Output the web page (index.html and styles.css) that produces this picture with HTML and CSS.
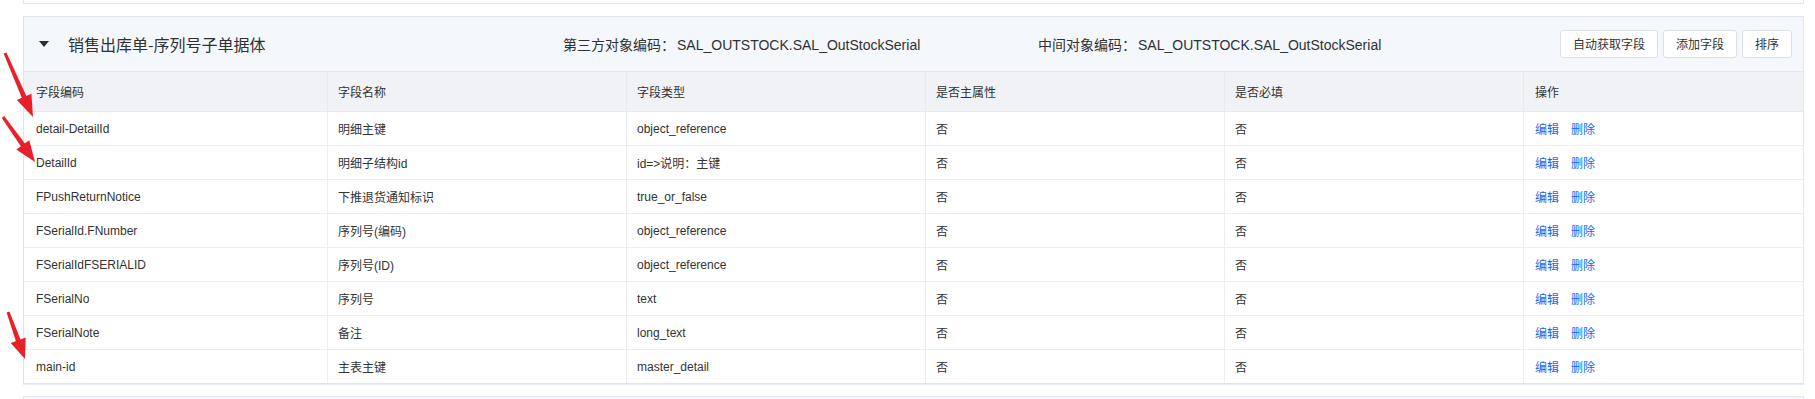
FILE: index.html
```html
<!DOCTYPE html>
<html lang="zh-CN">
<head>
<meta charset="utf-8">
<title>字段列表</title>
<link rel="stylesheet" href="styles.css">
</head>
<body>
<div class="page">
  <div class="card card-prev"></div>

  <div class="card card-main">
    <div class="card-head">
      <div class="title-wrap">
        <span class="caret"></span>
        <span class="title">销售出库单-序列号子单据体</span>
      </div>
      <div class="meta meta-first">第三方对象编码：<span class="meta-val">SAL_OUTSTOCK.SAL_OutStockSerial</span></div>
      <div class="meta">中间对象编码：<span class="meta-val">SAL_OUTSTOCK.SAL_OutStockSerial</span></div>
      <div class="actions">
        <button class="btn">自动获取字段</button>
        <button class="btn">添加字段</button>
        <button class="btn">排序</button>
      </div>
    </div>

    <div class="grid">
      <div class="row row-head">
        <div class="cell">字段编码</div>
        <div class="cell">字段名称</div>
        <div class="cell">字段类型</div>
        <div class="cell">是否主属性</div>
        <div class="cell">是否必填</div>
        <div class="cell">操作</div>
      </div>
      <div class="row">
        <div class="cell">detail-DetailId</div>
        <div class="cell">明细主键</div>
        <div class="cell">object_reference</div>
        <div class="cell">否</div>
        <div class="cell">否</div>
        <div class="cell"><a class="link">编辑</a><a class="link">删除</a></div>
      </div>
      <div class="row">
        <div class="cell">DetailId</div>
        <div class="cell">明细子结构id</div>
        <div class="cell">id=&gt;说明：主键</div>
        <div class="cell">否</div>
        <div class="cell">否</div>
        <div class="cell"><a class="link">编辑</a><a class="link">删除</a></div>
      </div>
      <div class="row">
        <div class="cell">FPushReturnNotice</div>
        <div class="cell">下推退货通知标识</div>
        <div class="cell">true_or_false</div>
        <div class="cell">否</div>
        <div class="cell">否</div>
        <div class="cell"><a class="link">编辑</a><a class="link">删除</a></div>
      </div>
      <div class="row">
        <div class="cell">FSerialId.FNumber</div>
        <div class="cell">序列号(编码)</div>
        <div class="cell">object_reference</div>
        <div class="cell">否</div>
        <div class="cell">否</div>
        <div class="cell"><a class="link">编辑</a><a class="link">删除</a></div>
      </div>
      <div class="row">
        <div class="cell">FSerialIdFSERIALID</div>
        <div class="cell">序列号(ID)</div>
        <div class="cell">object_reference</div>
        <div class="cell">否</div>
        <div class="cell">否</div>
        <div class="cell"><a class="link">编辑</a><a class="link">删除</a></div>
      </div>
      <div class="row">
        <div class="cell">FSerialNo</div>
        <div class="cell">序列号</div>
        <div class="cell">text</div>
        <div class="cell">否</div>
        <div class="cell">否</div>
        <div class="cell"><a class="link">编辑</a><a class="link">删除</a></div>
      </div>
      <div class="row">
        <div class="cell">FSerialNote</div>
        <div class="cell">备注</div>
        <div class="cell">long_text</div>
        <div class="cell">否</div>
        <div class="cell">否</div>
        <div class="cell"><a class="link">编辑</a><a class="link">删除</a></div>
      </div>
      <div class="row row-last">
        <div class="cell">main-id</div>
        <div class="cell">主表主键</div>
        <div class="cell">master_detail</div>
        <div class="cell">否</div>
        <div class="cell">否</div>
        <div class="cell"><a class="link">编辑</a><a class="link">删除</a></div>
      </div>
    </div>
  </div>

  <div class="card card-next"></div>
</div>

<svg class="arrows" width="1815" height="399" viewBox="0 0 1815 399" xmlns="http://www.w3.org/2000/svg">
  <g fill="#e8202a">
    <polygon points="3.6,53.6 6.4,52.4 27.2,97.7 22.6,99.7"/>
    <polygon points="16.8,100.1 31.4,93.7 33,117"/>
    <polygon points="1.8,117.9 4.2,116.1 26,145 22,148"/>
    <polygon points="16.3,149.5 29.3,140.3 35,162"/>
    <polygon points="6.6,312.5 9.4,311.5 21.2,341.2 16.5,343"/>
    <polygon points="10.7,342.9 25.7,337.5 25,359"/>
  </g>
</svg>
</body>
</html>
```

FILE: styles.css
```css
* {
  box-sizing: border-box;
}

html, body {
  margin: 0;
  padding: 0;
  background: #ffffff;
}

body {
  font-family: "Liberation Sans", Arial, "Noto Sans CJK SC", sans-serif;
  color: #333333;
  font-size: 12px;
  position: relative;
  width: 1815px;
  height: 399px;
  overflow: hidden;
}

.page {
  padding: 0 11px 0 23px;
}

.card {
  border: 1px solid #e1e6ee;
  background: #ffffff;
}

.card-prev {
  height: 4px;
  border-top: none;
  background: #fbfcfe;
  margin-bottom: 12px;
}

.card-main {
  margin-bottom: 12px;
  box-shadow: 0 1px 0 #e8ebf0;
}

.card-next {
  height: 20px;
  background: #f5f7fb;
}

.card-head {
  height: 55px;
  background: #f4f7fc;
  border-bottom: 1px solid #e4e8ef;
  display: flex;
  align-items: center;
  padding: 0 11px 0 15px;
}

.title-wrap {
  width: 524px;
  flex: none;
  display: flex;
  align-items: center;
  gap: 19px;
}

.caret {
  width: 0;
  height: 0;
  border-left: 5px solid transparent;
  border-right: 5px solid transparent;
  border-top: 6px solid #2b2f36;
}

.title {
  font-size: 16px;
  color: #303133;
  font-family: "Noto Sans CJK SC", "Liberation Sans", sans-serif;
}

.meta {
  font-size: 14px;
  color: #303133;
  white-space: nowrap;
  font-family: "Liberation Sans", "Noto Sans CJK SC", sans-serif;
}

.meta-val {
  margin-left: 2px;
}

.meta-first {
  width: 475px;
  flex: none;
}

.actions {
  margin-left: auto;
  display: flex;
  gap: 5px;
}

.btn {
  height: 28px;
  padding: 0 12px;
  border: 1px solid #dcdfe6;
  border-radius: 3px;
  background: #ffffff;
  color: #333333;
  font-size: 12px;
  font-family: "Noto Sans CJK SC", "Liberation Sans", sans-serif;
  line-height: 26px;
}

.grid {
  display: flex;
  flex-direction: column;
}

.row {
  display: grid;
  grid-template-columns: 304px 299px 299px 299px 299px 1fr;
  height: 34px;
  border-bottom: 1px solid #ebeef3;
}

.row-head {
  height: 40px;
  background: #f0f2f6;
  border-bottom: 1px solid #e6e9ef;
}

.row-last {
  height: 33px;
  border-bottom: none;
}

.cell {
  display: flex;
  align-items: center;
  padding: 0 10px;
  border-right: 1px solid #ebeef3;
  white-space: nowrap;
  overflow: hidden;
  font-size: 12px;
  color: #333333;
}

.row-head .cell {
  border-right-color: #e6e9ef;
}

.cell:first-child {
  padding-left: 12px;
}

.cell:last-child {
  border-right: none;
  padding-left: 11px;
}

.link {
  color: #1668f0;
  margin-right: 12px;
  cursor: pointer;
}

.arrows {
  position: absolute;
  left: 0;
  top: 0;
  pointer-events: none;
}
```
